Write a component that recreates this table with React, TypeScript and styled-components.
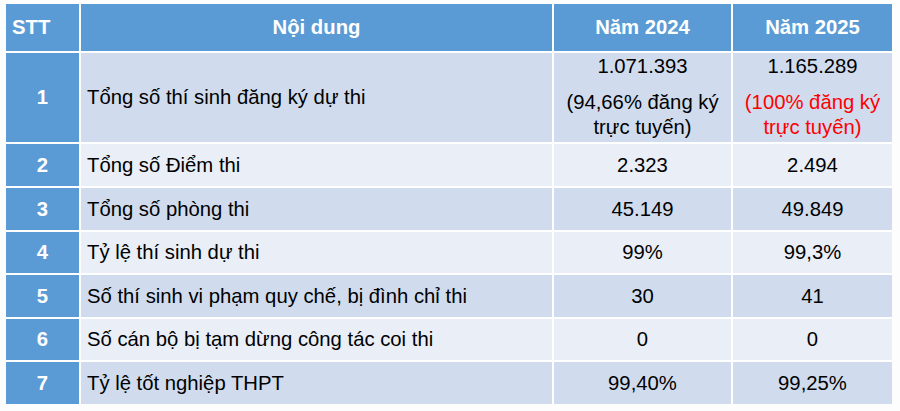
import React from "react"
import styled, { createGlobalStyle } from "styled-components"

const GlobalStyle = createGlobalStyle`
  html, body {
    margin: 0;
    padding: 0;
    background: #fdfdfd;
  }
  body {
    font-family: "Liberation Sans", Arial, sans-serif;
  }
`

const Page = styled.div`
  width: 900px;
  height: 411px;
  padding: 4px 0 0 6px;
  box-sizing: border-box;
`

const Table = styled.div`
  display: grid;
  grid-template-columns: 73px 471px 177px 159px;
  grid-template-rows: 47px 89px 42px 42px 41px 42px 41px 42px;
  gap: 2px;
  width: 886px;
  background: #ffffff;
  color: #000;
  font-size: 20.3px;
`

const HeadCell = styled.div<{ $left?: boolean }>`
  background: #5b9bd5;
  color: #ffffff;
  font-weight: bold;
  display: flex;
  align-items: center;
  justify-content: ${(p) => (p.$left ? "flex-start" : "center")};
  padding-left: ${(p) => (p.$left ? "6px" : "0")};
`

const IndexCell = styled.div`
  background: #5b9bd5;
  color: #ffffff;
  font-weight: bold;
  display: flex;
  align-items: center;
  justify-content: center;
`

const Cell = styled.div<{ $dark: boolean; $left?: boolean }>`
  background: ${(p) => (p.$dark ? "#d0dcee" : "#e9eef7")};
  display: flex;
  align-items: center;
  justify-content: ${(p) => (p.$left ? "flex-start" : "center")};
  padding-left: ${(p) => (p.$left ? "6px" : "0")};
`

const StackCell = styled.div<{ $dark: boolean }>`
  background: ${(p) => (p.$dark ? "#d0dcee" : "#e9eef7")};
  display: flex;
  flex-direction: column;
  align-items: center;
  padding-top: 1px;
  text-align: center;
  line-height: 25px;
`

const Note = styled.div<{ $red?: boolean }>`
  margin-top: 11px;
  color: ${(p) => (p.$red ? "#ff0000" : "inherit")};
`

type Row = { label: string; y2024: string; y2025: string }

const rows: Row[] = [
  { label: "Tổng số Điểm thi", y2024: "2.323", y2025: "2.494" },
  { label: "Tổng số phòng thi", y2024: "45.149", y2025: "49.849" },
  { label: "Tỷ lệ thí sinh dự thi", y2024: "99%", y2025: "99,3%" },
  { label: "Số thí sinh vi phạm quy chế, bị đình chỉ thi", y2024: "30", y2025: "41" },
  { label: "Số cán bộ bị tạm dừng công tác coi thi", y2024: "0", y2025: "0" },
  { label: "Tỷ lệ tốt nghiệp THPT", y2024: "99,40%", y2025: "99,25%" },
]

export default function App() {
  return (
    <Page>
      <GlobalStyle />
      <Table>
        <HeadCell $left>STT</HeadCell>
        <HeadCell>Nội dung</HeadCell>
        <HeadCell>Năm 2024</HeadCell>
        <HeadCell>Năm 2025</HeadCell>

        <IndexCell>1</IndexCell>
        <Cell $dark $left>Tổng số thí sinh đăng ký dự thi</Cell>
        <StackCell $dark>
          <div>1.071.393</div>
          <Note>(94,66% đăng ký<br />trực tuyến)</Note>
        </StackCell>
        <StackCell $dark>
          <div>1.165.289</div>
          <Note $red>(100% đăng ký<br />trực tuyến)</Note>
        </StackCell>

        {rows.map((r, i) => {
          const dark = i % 2 === 1
          return (
            <React.Fragment key={i}>
              <IndexCell>{i + 2}</IndexCell>
              <Cell $dark={dark} $left>{r.label}</Cell>
              <Cell $dark={dark}>{r.y2024}</Cell>
              <Cell $dark={dark}>{r.y2025}</Cell>
            </React.Fragment>
          )
        })}
      </Table>
    </Page>
  )
}
